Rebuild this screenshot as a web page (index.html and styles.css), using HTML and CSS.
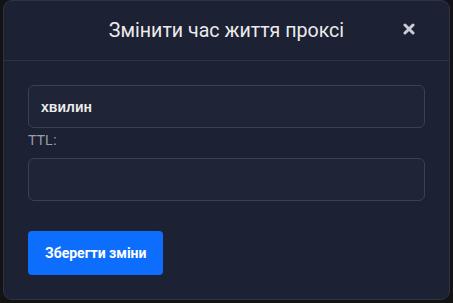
FILE: index.html
```html
<!DOCTYPE html>
<html lang="uk">
<head>
    <meta charset="UTF-8">
    <meta name="viewport" content="width=device-width, initial-scale=1.0">
    <title>Змінити час життя проксі</title>
    <link rel="stylesheet" href="styles.css">
</head>
<body>
    <div class="modal">
        <div class="modal-header">
            <span></span>
            <h2 class="modal-title">Змінити час життя проксі</h2>
            <button class="close-button" aria-label="Закрити">
                <svg width="12" height="12" viewBox="0 0 12 12">
                    <path d="M2 2 L10 10 M10 2 L2 10" stroke="#c9cdd6" stroke-width="3" stroke-linecap="round"/>
                </svg>
            </button>
        </div>

        <form class="modal-body">
            <input class="field field-bold" type="text" value="хвилин">
            <label class="field-label">TTL:</label>
            <input class="field" type="text">
            <button class="save-button" type="button">Зберегти зміни</button>
        </form>
    </div>
</body>
</html>
```

FILE: styles.css
```css
* {
    margin: 0;
    padding: 0;
    box-sizing: border-box;
}

body {
    font-family: 'Liberation Sans', Arial, sans-serif;
    background: #131313;
    color: #e8e8e8;
    padding: 0 3px;
}

.modal {
    height: 300px;
    background: #1c2133;
    border: 1px solid #2d3344;
    border-radius: 9px;
}

.modal-header {
    height: 60px;
    display: grid;
    grid-template-columns: 1fr auto 1fr;
    align-items: center;
    border-bottom: 1px solid #2b3243;
}

.modal-title {
    font-family: Roboto, sans-serif;
    font-size: 19.6px;
    font-weight: 400;
    color: #ebebeb;
}

.close-button {
    justify-self: end;
    margin-right: 34px;
    margin-top: -4px;
    background: none;
    border: none;
    width: 12px;
    height: 12px;
    display: flex;
    cursor: pointer;
}

.modal-body {
    padding: 24px;
    display: flex;
    flex-direction: column;
    align-items: flex-start;
}

.field {
    width: 100%;
    height: 43px;
    background: #1f2436;
    border: 1px solid #3a4152;
    border-radius: 6px;
    padding: 0 12px;
    color: #ececec;
    font-family: 'Liberation Sans', Arial, sans-serif;
    font-size: 14px;
    outline: none;
}

.field-bold {
    font-weight: 700;
}

.field-label {
    margin: 4px 0 10px;
    line-height: 16px;
    font-size: 14px;
    color: #9a9ea8;
}

.save-button {
    margin-top: 30px;
    height: 44px;
    padding: 0 17px;
    background: #0d6efd;
    color: #ffffff;
    border: none;
    border-radius: 4px;
    font-family: Roboto, sans-serif;
    font-size: 14px;
    font-weight: 700;
    cursor: pointer;
}
```
